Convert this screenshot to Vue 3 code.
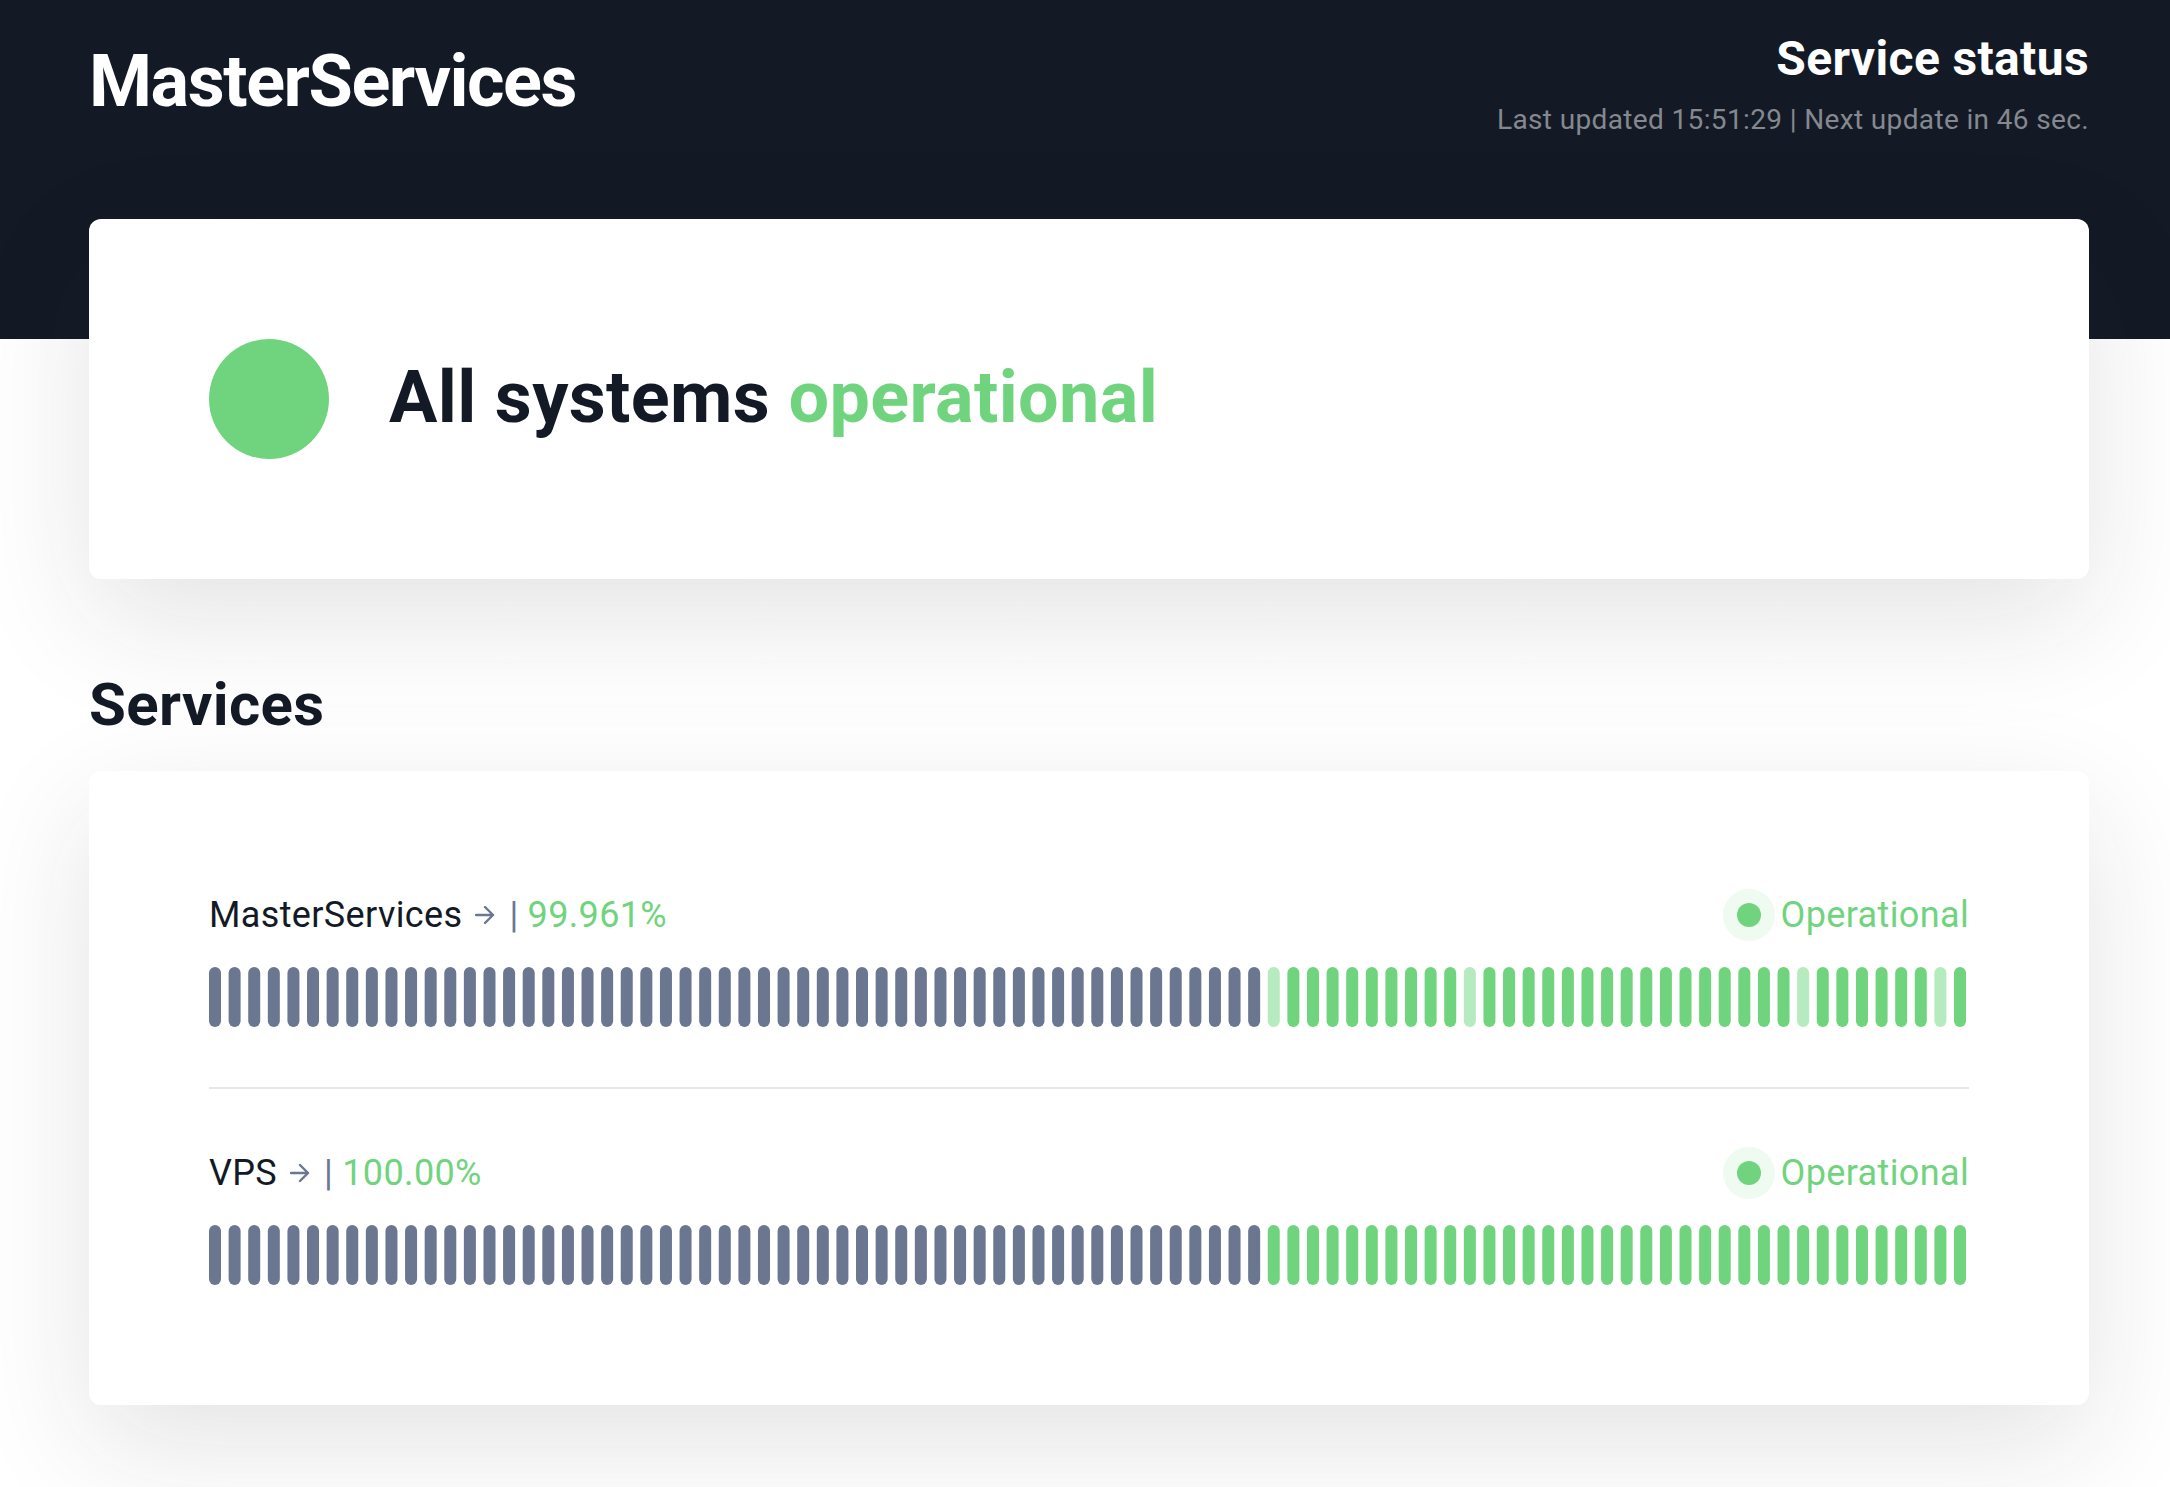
<script setup>
const DAYS = 90
const FIRST_TRACKED_DAY = 54
const BAR_STEP = 1745 / (DAYS - 1)

function history(degradedDays) {
  return Array.from({ length: DAYS }, (_, day) => {
    let state = 'up'
    if (day < FIRST_TRACKED_DAY) state = 'none'
    else if (degradedDays.includes(day)) state = 'partial'
    return { x: day * BAR_STEP, state }
  })
}

const services = [
  { name: 'MasterServices', uptime: '99.961%', status: 'Operational', days: history([54, 64, 81, 88]) },
  { name: 'VPS', uptime: '100.00%', status: 'Operational', days: history([]) },
]
</script>

<template>
  <div class="page">
    <header class="header">
      <h1 class="brand">MasterServices</h1>
      <div class="summary">
        <h2 class="summary-title">Service status</h2>
        <p class="summary-note">Last updated 15:51:29 | Next update in 46 sec.</p>
      </div>
    </header>

    <main class="content">
      <section class="card overall">
        <span class="overall-dot"></span>
        <h2 class="overall-text">All systems <span class="green">operational</span></h2>
      </section>

      <h2 class="section-title">Services</h2>

      <section class="card">
        <article v-for="service in services" :key="service.name" class="service">
          <div class="service-head">
            <div class="service-info">
              <a class="service-link" href="#">
                {{ service.name }}
                <svg class="arrow" viewBox="0 0 20 20" aria-hidden="true">
                  <path d="M1 10H18M10 2L18 10L10 18" />
                </svg>
              </a>
              <span class="divider">|</span>
              <span class="green">{{ service.uptime }}</span>
            </div>
            <div class="service-status green">
              <span class="status-dot"></span>
              <span>{{ service.status }}</span>
            </div>
          </div>
          <svg class="bars" viewBox="0 0 1760 60" role="img" :aria-label="service.name + ' uptime history'">
            <rect
              v-for="(day, index) in service.days"
              :key="index"
              :class="day.state"
              :x="day.x"
              y="0"
              width="12"
              height="60"
              rx="6"
            />
          </svg>
        </article>
      </section>
    </main>
  </div>
</template>

<style>
body {
  margin: 0;
  background: #fff;
}
</style>

<style scoped>
.page {
  overflow: hidden;
  padding-bottom: 82px;
  font-family: Roboto, "Liberation Sans", sans-serif;
  font-size: 36px;
  color: #131a26;
  letter-spacing: 0.01em;
}

h1,
h2,
p {
  margin: 0;
  font-weight: 700;
}

.header {
  display: flex;
  justify-content: space-between;
  align-items: flex-start;
  padding: 31px 81px 201px 89px;
  background: #131a26;
  color: #fff;
}

.brand {
  margin-top: 15px;
  font-size: 72px;
  line-height: 72px;
  letter-spacing: -0.02em;
}

.summary {
  text-align: right;
}

.summary-title {
  font-size: 48px;
  line-height: 56px;
}

.summary-note {
  margin-top: 15px;
  font-size: 28px;
  line-height: 36px;
  font-weight: 400;
  color: #85888e;
}

.content {
  margin-top: -120px;
  padding: 0 81px 0 89px;
}

.card {
  padding: 120px;
  border-radius: 12px;
  background: #fff;
  box-shadow: 0 40px 120px rgba(29, 29, 29, 0.12);
}

.overall {
  display: flex;
  align-items: center;
  gap: 60px;
}

.overall-dot {
  width: 120px;
  height: 120px;
  border-radius: 50%;
  background: #70d47e;
}

.overall-text {
  padding-bottom: 2px;
  font-size: 72px;
  line-height: 84px;
}

.green {
  color: #70d47e;
}

.section-title {
  position: relative;
  margin: 90px 0 30px;
  font-size: 60px;
  line-height: 72px;
}

.service + .service {
  margin-top: 60px;
  padding-top: 60px;
  border-top: 2px solid #e7e7e7;
}

.service-head {
  display: flex;
  justify-content: space-between;
  align-items: center;
  margin-bottom: 28px;
  line-height: 48px;
}

.service-info {
  display: flex;
  align-items: center;
  gap: 9px;
}

.service-link {
  display: flex;
  align-items: center;
  gap: 13px;
  color: inherit;
  text-decoration: none;
}

.arrow {
  width: 20px;
  height: 20px;
  margin-right: 5px;
  fill: none;
  stroke: #6b7790;
  stroke-width: 2.4;
  stroke-linecap: round;
  stroke-linejoin: round;
}

.divider {
  color: #6b7790;
}

.service-status {
  display: flex;
  align-items: center;
  gap: 20px;
}

.status-dot {
  width: 24px;
  height: 24px;
  border-radius: 50%;
  background: #70d47e;
  box-shadow: 0 0 0 14px #effaf1;
}

.bars {
  display: block;
  width: 100%;
}

.none {
  fill: #6b7790;
}

.up {
  fill: #70d47e;
}

.partial {
  fill: #b6eabf;
}
</style>
